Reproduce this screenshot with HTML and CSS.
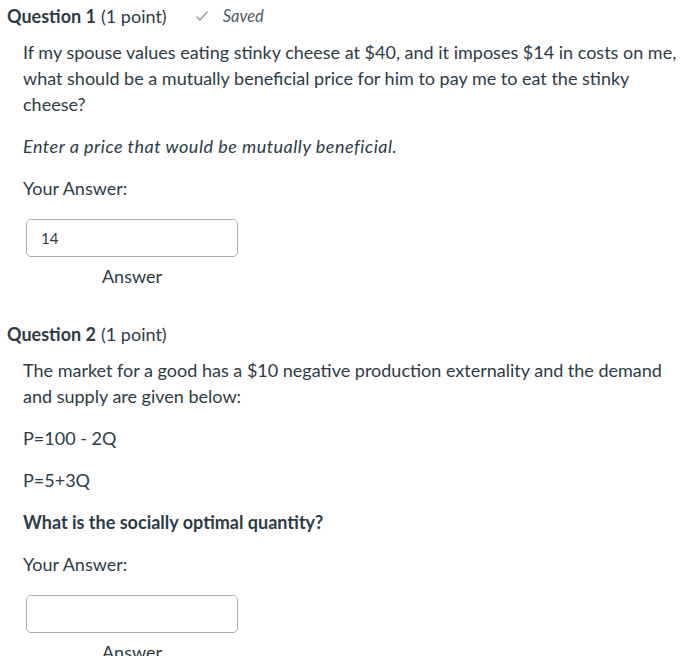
FILE: index.html
```html
<!DOCTYPE html>
<html>
<head>
<meta charset="utf-8">
<link rel="stylesheet" href="styles.css">
</head>
<body>
<div class="quiz">
  <section class="question">
    <h2 class="q-head"><strong>Question 1</strong> (1 point)
      <span class="saved"><svg class="check" width="14" height="12" viewBox="0 0 14 12"><polyline points="1.5,6.5 5,10 12.5,1.5" fill="none" stroke="#9aa2a8" stroke-width="1.6"/></svg><em>Saved</em></span>
    </h2>
    <div class="q-body">
      <p class="para">If my spouse values eating stinky cheese at $40, and it imposes $14 in costs on me, what should be a mutually beneficial price for him to pay me to eat the stinky cheese?</p>
      <p class="para"><em class="instr">Enter a price that would be mutually beneficial.</em></p>
      <p class="para">Your Answer:</p>
      <div class="answer">
        <div class="input">14</div>
        <div class="answer-label">Answer</div>
      </div>
    </div>
  </section>
  <section class="question q2">
    <h2 class="q-head"><strong>Question 2</strong> (1 point)</h2>
    <div class="q-body">
      <p class="para">The market for a good has a $10 negative production externality and the demand and supply are given below:</p>
      <p class="para">P=100 - 2Q</p>
      <p class="para">P=5+3Q</p>
      <p class="para"><strong>What is the socially optimal quantity?</strong></p>
      <p class="para">Your Answer:</p>
      <div class="answer">
        <div class="input"></div>
        <div class="answer-label">Answer</div>
      </div>
    </div>
  </section>
</div>
</body>
</html>
```
FILE: styles.css
```css
html, body {
  margin: 0;
  padding: 0;
  background: #ffffff;
}
body {
  font-family: Lato, "Noto Sans", sans-serif;
  color: #2d3b45;
  font-size: 18px;
  line-height: 26px;
}
.quiz {
  padding: 3px 0 0 7px;
}
.q-head {
  margin: 0;
  font-size: 18px;
  font-weight: 400;
  line-height: 26px;
  display: flex;
  align-items: center;
}
.q-head strong {
  font-weight: 700;
  margin-right: 5px;
}
.saved {
  display: inline-flex;
  align-items: center;
  margin-left: 28px;
  color: #4d5a63;
  font-size: 16.5px;
}
.check {
  margin-right: 14px;
}
.q-body {
  padding: 0 12px 0 16px;
  margin-top: 10px;
}
.para {
  margin: 0 0 16px 0;
}
.instr {
  letter-spacing: 0.5px;
}
.answer {
  width: 212px;
  margin-left: 3px;
  padding-top: 2px;
}
.input {
  height: 36px;
  border: 1px solid #a8aeb3;
  border-radius: 5px;
  box-sizing: content-box;
  font-size: 15px;
  line-height: 36px;
  padding-left: 14px;
}
.answer-label {
  text-align: center;
  margin-top: 6px;
}
.q2 {
  margin-top: 32px;
}
```
